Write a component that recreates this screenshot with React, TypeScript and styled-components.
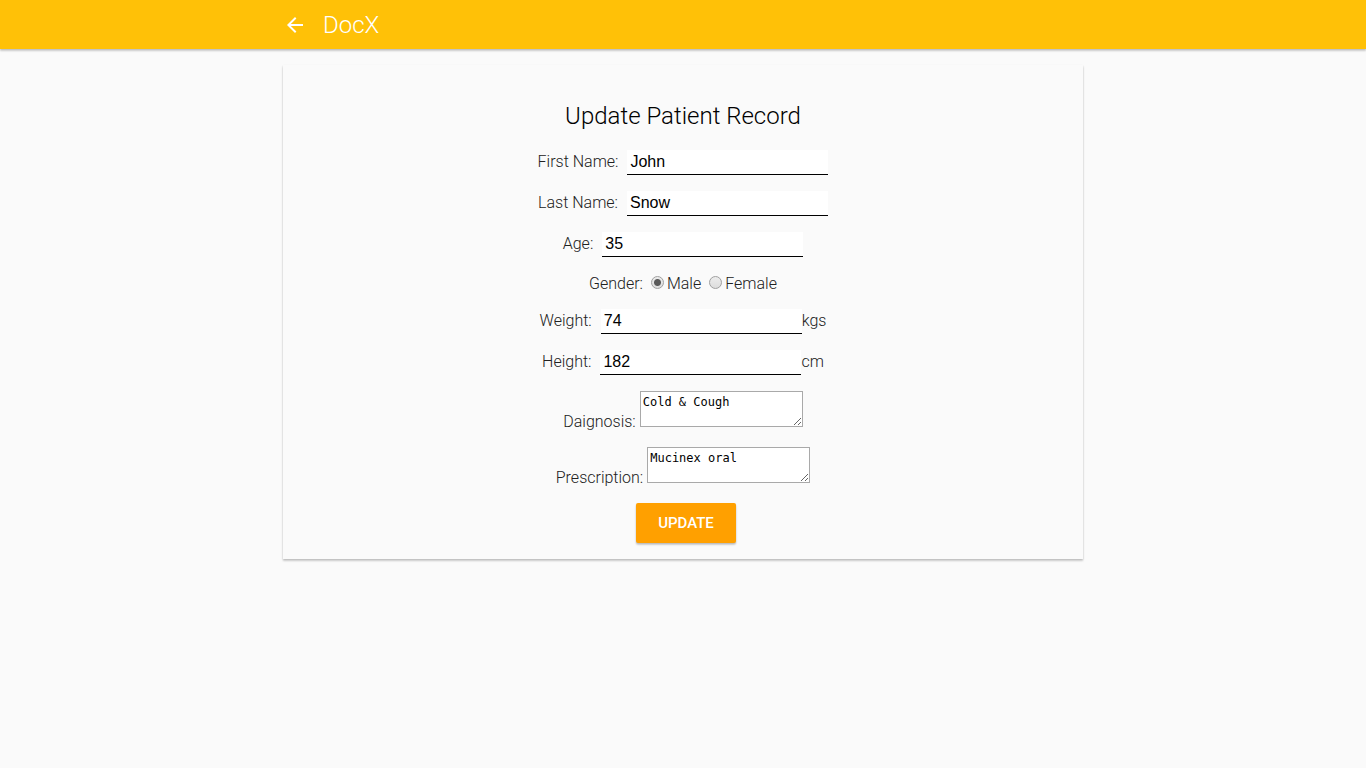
import React from "react";
import styled, { createGlobalStyle } from "styled-components";
import { MdArrowBack } from "react-icons/md";

const raised =
  "0 2px 2px rgba(0, 0, 0, 0.15), 0 1px 2px rgba(0, 0, 0, 0.14)";

const GlobalStyle = createGlobalStyle`
  * { box-sizing: border-box; }
  body {
    margin: 0;
    background: #fafafa;
    color: #212121;
    font: 300 16px/20px Roboto, sans-serif;
  }
`;

const Header = styled.header`
  height: 49px;
  background: #ffc107;
  box-shadow: ${raised};
`;

const HeaderInner = styled.div`
  display: flex;
  align-items: center;
  gap: 16px;
  max-width: 800px;
  height: 100%;
  margin: 0 auto;
  color: #fff;
`;

const BackLink = styled.a`
  display: flex;
  color: inherit;
`;

const Brand = styled.span`
  font-size: 24px;
  line-height: 32px;
`;

const Card = styled.main`
  max-width: 800px;
  margin: 16px auto;
  padding: 32px 16px 16px;
  box-shadow: ${raised};
`;

const Form = styled.form`
  display: flex;
  flex-direction: column;
  align-items: center;
  gap: 16px;
`;

const Title = styled.h1`
  margin: 0;
  padding: 3px 0 2px;
  color: #000;
  font-size: 24px;
  line-height: 32px;
  font-weight: 300;
`;

const Row = styled.div`
  display: flex;
  align-items: baseline;
`;

const Label = styled.label`
  margin-right: 9px;
`;

const TextInput = styled.input`
  width: 201px;
  height: 25px;
  padding: 0 3px 1px;
  border: 0;
  border-bottom: 1px solid #000;
  border-radius: 0;
  outline: 0;
  background: #fff;
  color: #000;
  font: 400 16px/20px "Liberation Sans", Arial, sans-serif;
`;

const GenderRow = styled.div`
  display: flex;
  align-items: center;
  gap: 8px;
  padding-top: 2px;
  line-height: 18px;
`;

const Option = styled.label`
  display: flex;
  align-items: center;
  gap: 3px;
`;

const Radio = styled.input`
  appearance: none;
  width: 13px;
  height: 13px;
  margin: 0 0 3px;
  border: 1px solid #a0a0a0;
  border-radius: 50%;
  background: linear-gradient(#ededed, #dcdcdc);

  &:checked {
    background: radial-gradient(circle, #5a5a5a 3px, transparent 4px),
      linear-gradient(#ededed, #dcdcdc);
  }
`;

const NoteRow = styled.div`
  display: flex;
  align-items: flex-end;
  gap: 4px;
  height: 40px;
  line-height: 18px;
`;

const NoteInput = styled.textarea`
  align-self: flex-start;
  width: 163px;
  height: 36px;
  padding: 2px;
  border: 1px solid #a9a9a9;
  border-radius: 0;
  outline: 0;
  background: #fff;
  color: #000;
  font: 400 12px/16px "DejaVu Sans Mono", monospace;
`;

const Actions = styled.div`
  padding-left: 6px;
`;

const UpdateButton = styled.button`
  width: 100px;
  height: 40px;
  padding: 0;
  border: 0;
  border-radius: 2px;
  background: #ffa000;
  color: #fff;
  font: 500 15px/20px Roboto, sans-serif;
  box-shadow: ${raised};
  cursor: pointer;
`;

const fields = [
  { id: "first", label: "First Name:", value: "John", unit: "" },
  { id: "last", label: "Last Name:", value: "Snow", unit: "" },
  { id: "age", label: "Age:", value: "35", unit: "" },
];

const measures = [
  { id: "weight", label: "Weight:", value: "74", unit: "kgs" },
  { id: "height", label: "Height:", value: "182", unit: "cm" },
];

const notes = [
  { id: "diagnosis", label: "Daignosis:", value: "Cold & Cough" },
  { id: "prescription", label: "Prescription:", value: "Mucinex oral" },
];

type FieldProps = { id: string; label: string; value: string; unit: string };

function Field({ id, label, value, unit }: FieldProps) {
  return (
    <Row>
      <Label htmlFor={id}>{label}</Label>
      <TextInput id={id} name={id} type="text" defaultValue={value} />
      {unit && <span>{unit}</span>}
    </Row>
  );
}

export default function App() {
  return (
    <>
      <GlobalStyle />
      <Header>
        <HeaderInner>
          <BackLink href="#" aria-label="Back">
            <MdArrowBack size={24} />
          </BackLink>
          <Brand>DocX</Brand>
        </HeaderInner>
      </Header>
      <Card>
        <Form onSubmit={(e) => e.preventDefault()}>
          <Title>Update Patient Record</Title>
          {fields.map((f) => (
            <Field key={f.id} {...f} />
          ))}
          <GenderRow role="radiogroup" aria-label="Gender">
            <span>Gender:</span>
            <Option>
              <Radio type="radio" name="gender" value="male" defaultChecked />
              Male
            </Option>
            <Option>
              <Radio type="radio" name="gender" value="female" />
              Female
            </Option>
          </GenderRow>
          {measures.map((f) => (
            <Field key={f.id} {...f} />
          ))}
          {notes.map((n) => (
            <NoteRow key={n.id}>
              <label htmlFor={n.id}>{n.label}</label>
              <NoteInput id={n.id} name={n.id} defaultValue={n.value} spellCheck={false} />
            </NoteRow>
          ))}
          <Actions>
            <UpdateButton type="submit">UPDATE</UpdateButton>
          </Actions>
        </Form>
      </Card>
    </>
  );
}
